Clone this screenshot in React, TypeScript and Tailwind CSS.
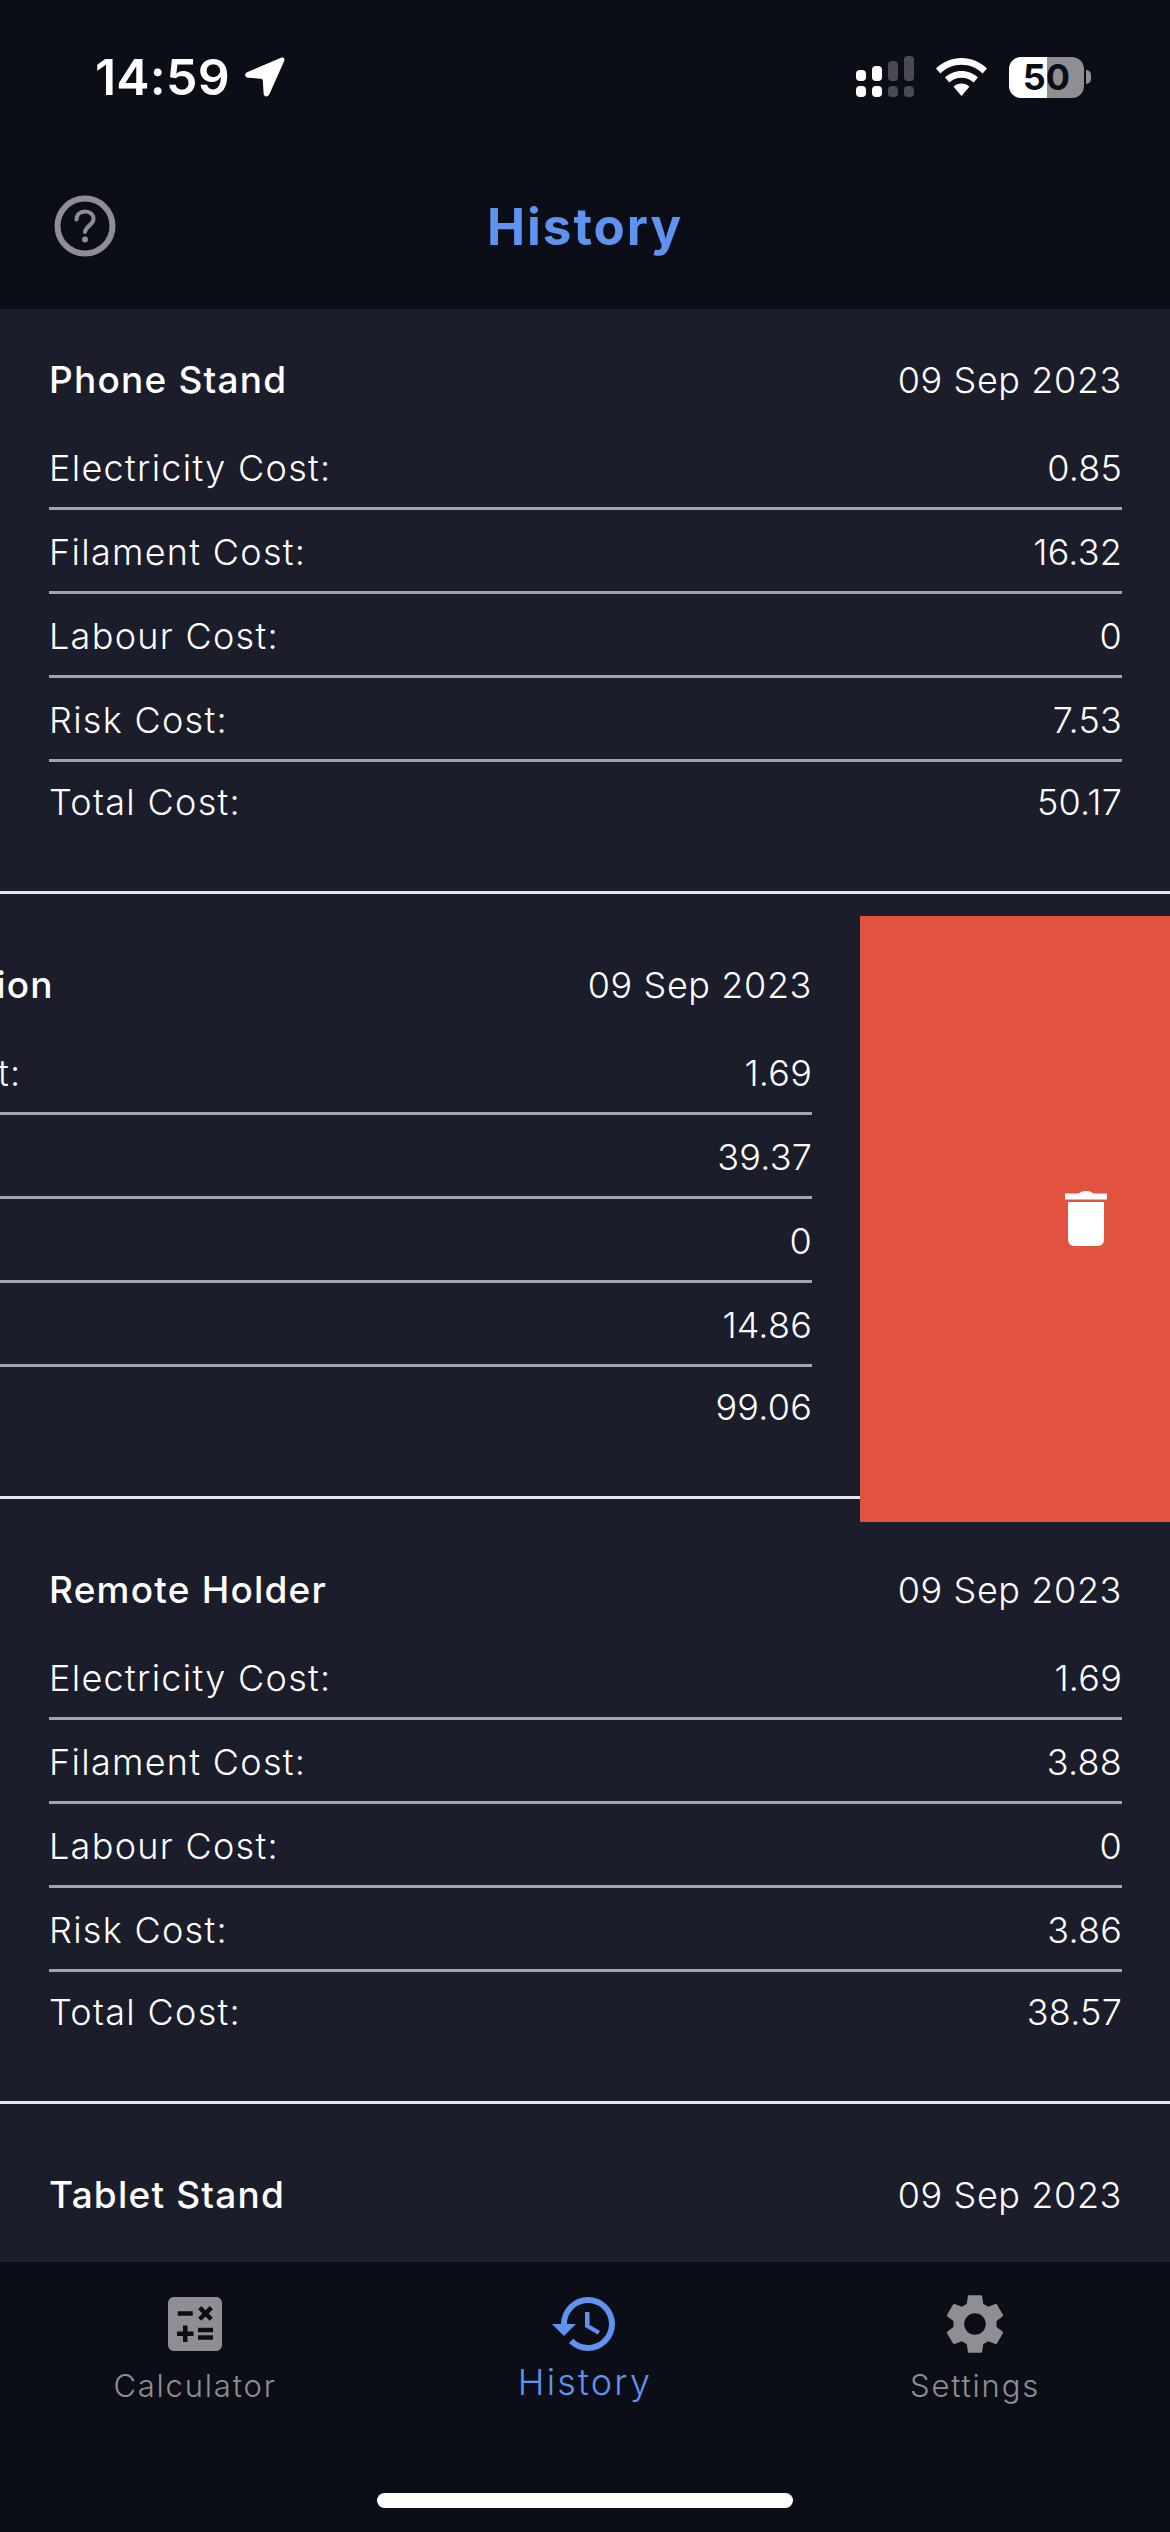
import { MdCalculate, MdHistory, MdSettings } from 'react-icons/md';

interface HistoryItem {
  name: string;
  date: string;
  electricity: string;
  filament: string;
  labour: string;
  risk: string;
  total: string;
}

const items: HistoryItem[] = [
  { name: 'Phone Stand', date: '09 Sep 2023', electricity: '0.85', filament: '16.32', labour: '0', risk: '7.53', total: '50.17' },
  { name: 'Charging Station', date: '09 Sep 2023', electricity: '1.69', filament: '39.37', labour: '0', risk: '14.86', total: '99.06' },
  { name: 'Remote Holder', date: '09 Sep 2023', electricity: '1.69', filament: '3.88', labour: '0', risk: '3.86', total: '38.57' },
  { name: 'Tablet Stand', date: '09 Sep 2023', electricity: '1.69', filament: '7.12', labour: '0', risk: '4.20', total: '42.01' },
];

function StatusBar() {
  return (
    <div className="flex h-[154px] items-center justify-between pl-[95px] pr-[79px] pt-[0px]">
      <div className="flex items-center gap-[15px]">
        <span className="text-[50px] font-semibold leading-none tracking-[0.2px] text-white">14:59</span>
        <svg width="40" height="40" viewBox="0 0 40 40" fill="#fff">
          <path d="M36 0.8 C38.5 -0.2 40.2 1.6 39.2 4 L24.5 37 C23 40.6 18.8 40 18.6 36.4 L17.8 23.6 C17.7 22.4 17 21.8 15.9 21.7 L3.2 20.8 C-0.3 20.4 -1 16.4 2.6 15 Z" />
        </svg>
      </div>
      <div className="flex items-center gap-[22px]">
        {/* Dual sim signal */}
        <svg width="58" height="42" viewBox="0 0 58 42">
          <rect x="0" y="14" width="10" height="11" rx="4" fill="#fff" />
          <rect x="16" y="10" width="10" height="15" rx="4" fill="#fff" />
          <rect x="32" y="5" width="10" height="20" rx="4" fill="#4a4b52" />
          <rect x="48" y="0" width="10" height="25" rx="4" fill="#4a4b52" />
          <rect x="0" y="30" width="10" height="11" rx="4" fill="#fff" />
          <rect x="16" y="30" width="10" height="11" rx="4" fill="#fff" />
          <rect x="32" y="30" width="10" height="11" rx="4" fill="#4a4b52" />
          <rect x="48" y="30" width="10" height="11" rx="4" fill="#4a4b52" />
        </svg>
        <svg width="51" height="38" viewBox="0 0 51 38" fill="#fff">
          <path d="M25.5 0 C35 0 44 3.8 51 10.5 L46.6 15.4 C41 10 33.5 6.8 25.5 6.8 C17.5 6.8 10 10 4.4 15.4 L0 10.5 C7 3.8 16 0 25.5 0 Z" />
          <path d="M25.5 13 C31.8 13 37.6 15.4 42 19.6 L37.6 24.4 C34.4 21.4 30.2 19.7 25.5 19.7 C20.8 19.7 16.6 21.4 13.4 24.4 L9 19.6 C13.4 15.4 19.2 13 25.5 13 Z" />
          <path d="M25.5 25.6 C28.6 25.6 31.3 26.7 33.4 28.7 L25.5 38 L17.6 28.7 C19.7 26.7 22.4 25.6 25.5 25.6 Z" />
        </svg>
        <div className="flex items-center gap-[2px]">
          <div className="relative flex h-[41px] w-[75px] overflow-hidden rounded-[12px]">
            <div className="w-[38px] bg-white" />
            <div className="flex-1 bg-[#8e8e93]" />
            <span className="absolute inset-0 flex items-center justify-center text-[36px] font-bold leading-none text-[#0c0e17]">50</span>
          </div>
          <div className="h-[14px] w-[5px] rounded-r-full bg-[#8e8e93]" />
        </div>
      </div>
    </div>
  );
}

function Header() {
  return (
    <div className="relative z-20 flex h-[155px] shrink-0 items-start bg-[#0c0e17]">
      <div className="grid w-full grid-cols-[170px_1fr_170px] items-center pt-[41px]">
        <svg className="ml-[54px]" width="62" height="62" viewBox="0 0 62 62" fill="none">
          <circle cx="31" cy="31" r="27.5" stroke="#8e8e93" strokeWidth="6" />
          <path d="M22.5 24.5 C22.5 19.5 26 16.5 31 16.5 C36 16.5 39.5 19.5 39.5 24 C39.5 30 32 30.5 31 37" stroke="#8e8e93" strokeWidth="4" strokeLinecap="round" />
          <circle cx="31" cy="44.5" r="3" fill="#8e8e93" />
        </svg>
        <div className="text-center text-[51px] font-bold leading-none tracking-[2px] text-[#6093f0]">History</div>
        <div />
      </div>
    </div>
  );
}

function CostRow({ label, value, last }: { label: string; value: string; last?: boolean }) {
  return (
    <div className={`flex h-[84px] items-center justify-between text-[36px] font-light leading-none text-white ${last ? 'pb-[6px]' : 'border-b-[3px] border-[#a3a3a8]'}`}>
      <span className="pt-[2px] tracking-[1.3px]">{label}</span>
      <span className="pt-[2px] tracking-[0.2px]">{value}</span>
    </div>
  );
}

function HistoryCard({ item }: { item: HistoryItem }) {
  return (
    <div className="h-[605px] w-[1170px] shrink-0 border-b-[3px] border-[#e6e6e8] bg-[#1b1d2a] pl-[49px] pr-[48px] pt-[50px]">
      <div className="flex h-[87px] items-center justify-between pb-[6px] leading-none text-white">
        <span className="text-[37px] font-medium tracking-[1.2px]">{item.name}</span>
        <span className="text-[36px] font-light tracking-[0.6px]">{item.date}</span>
      </div>
      <CostRow label="Electricity Cost:" value={item.electricity} />
      <CostRow label="Filament Cost:" value={item.filament} />
      <CostRow label="Labour Cost:" value={item.labour} />
      <CostRow label="Risk Cost:" value={item.risk} />
      <CostRow label="Total Cost:" value={item.total} last />
    </div>
  );
}

// Card swiped to the left, with the delete action showing
function SwipedCard({ item }: { item: HistoryItem }) {
  return (
    <div className="flex w-[1170px]">
      <div className="-ml-[310px] shrink-0">
        <HistoryCard item={item} />
      </div>
      <div className="relative z-10 mb-[-23px] mt-[22px] flex w-[310px] shrink-0 items-center justify-end bg-[#e15241] pr-[63px]">
        <svg width="42" height="56" viewBox="0 0 42 56" fill="#fff">
          <path d="M14 2.5 C15 1 17 0 21 0 C25 0 27 1 28 2.5 L42 2.5 L42 8.5 L0 8.5 L0 2.5 Z" />
          <path d="M3 11 L39 11 L39 48 C39 52.5 36.5 55 32 55 L10 55 C5.5 55 3 52.5 3 48 Z" />
        </svg>
      </div>
    </div>
  );
}

function TabItem({ icon, label, active }: { icon: React.ReactNode; label: string; active?: boolean }) {
  return (
    <div className={`flex flex-col items-center ${active ? 'text-[#6093f0]' : 'text-[#8e8e93]'}`}>
      <div className="h-[72px]">{icon}</div>
      <span className={`font-light leading-none ${active ? 'mt-[4px] text-[36px] tracking-[2.2px]' : 'mt-[10px] text-[31px] tracking-[1.8px]'}`}>{label}</span>
    </div>
  );
}

function TabBar() {
  return (
    <div className="relative z-20 flex h-[270px] shrink-0 flex-col bg-[#0c0e17]">
      <div className="grid grid-cols-3 pt-[26px]">
        <TabItem icon={<MdCalculate size={72} />} label="Calculator" />
        <TabItem icon={<MdHistory size={72} />} label="History" active />
        <TabItem icon={<MdSettings size={72} />} label="Settings" />
      </div>
      <div className="mt-auto mb-[24px] h-[15px] w-[416px] self-center rounded-full bg-white" />
    </div>
  );
}

export default function App() {
  return (
    <div className="flex h-[2532px] w-[1170px] flex-col overflow-hidden bg-[#0c0e17] font-['Inter',sans-serif]">
      <StatusBar />
      <Header />
      <div className="min-h-0 flex-1 overflow-hidden bg-[#1b1d2a]">
        <div className="-mt-[20px]">
          {items.map((item, i) =>
            i === 1 ? <SwipedCard key={item.name} item={item} /> : <HistoryCard key={item.name} item={item} />
          )}
        </div>
      </div>
      <TabBar />
    </div>
  );
}
